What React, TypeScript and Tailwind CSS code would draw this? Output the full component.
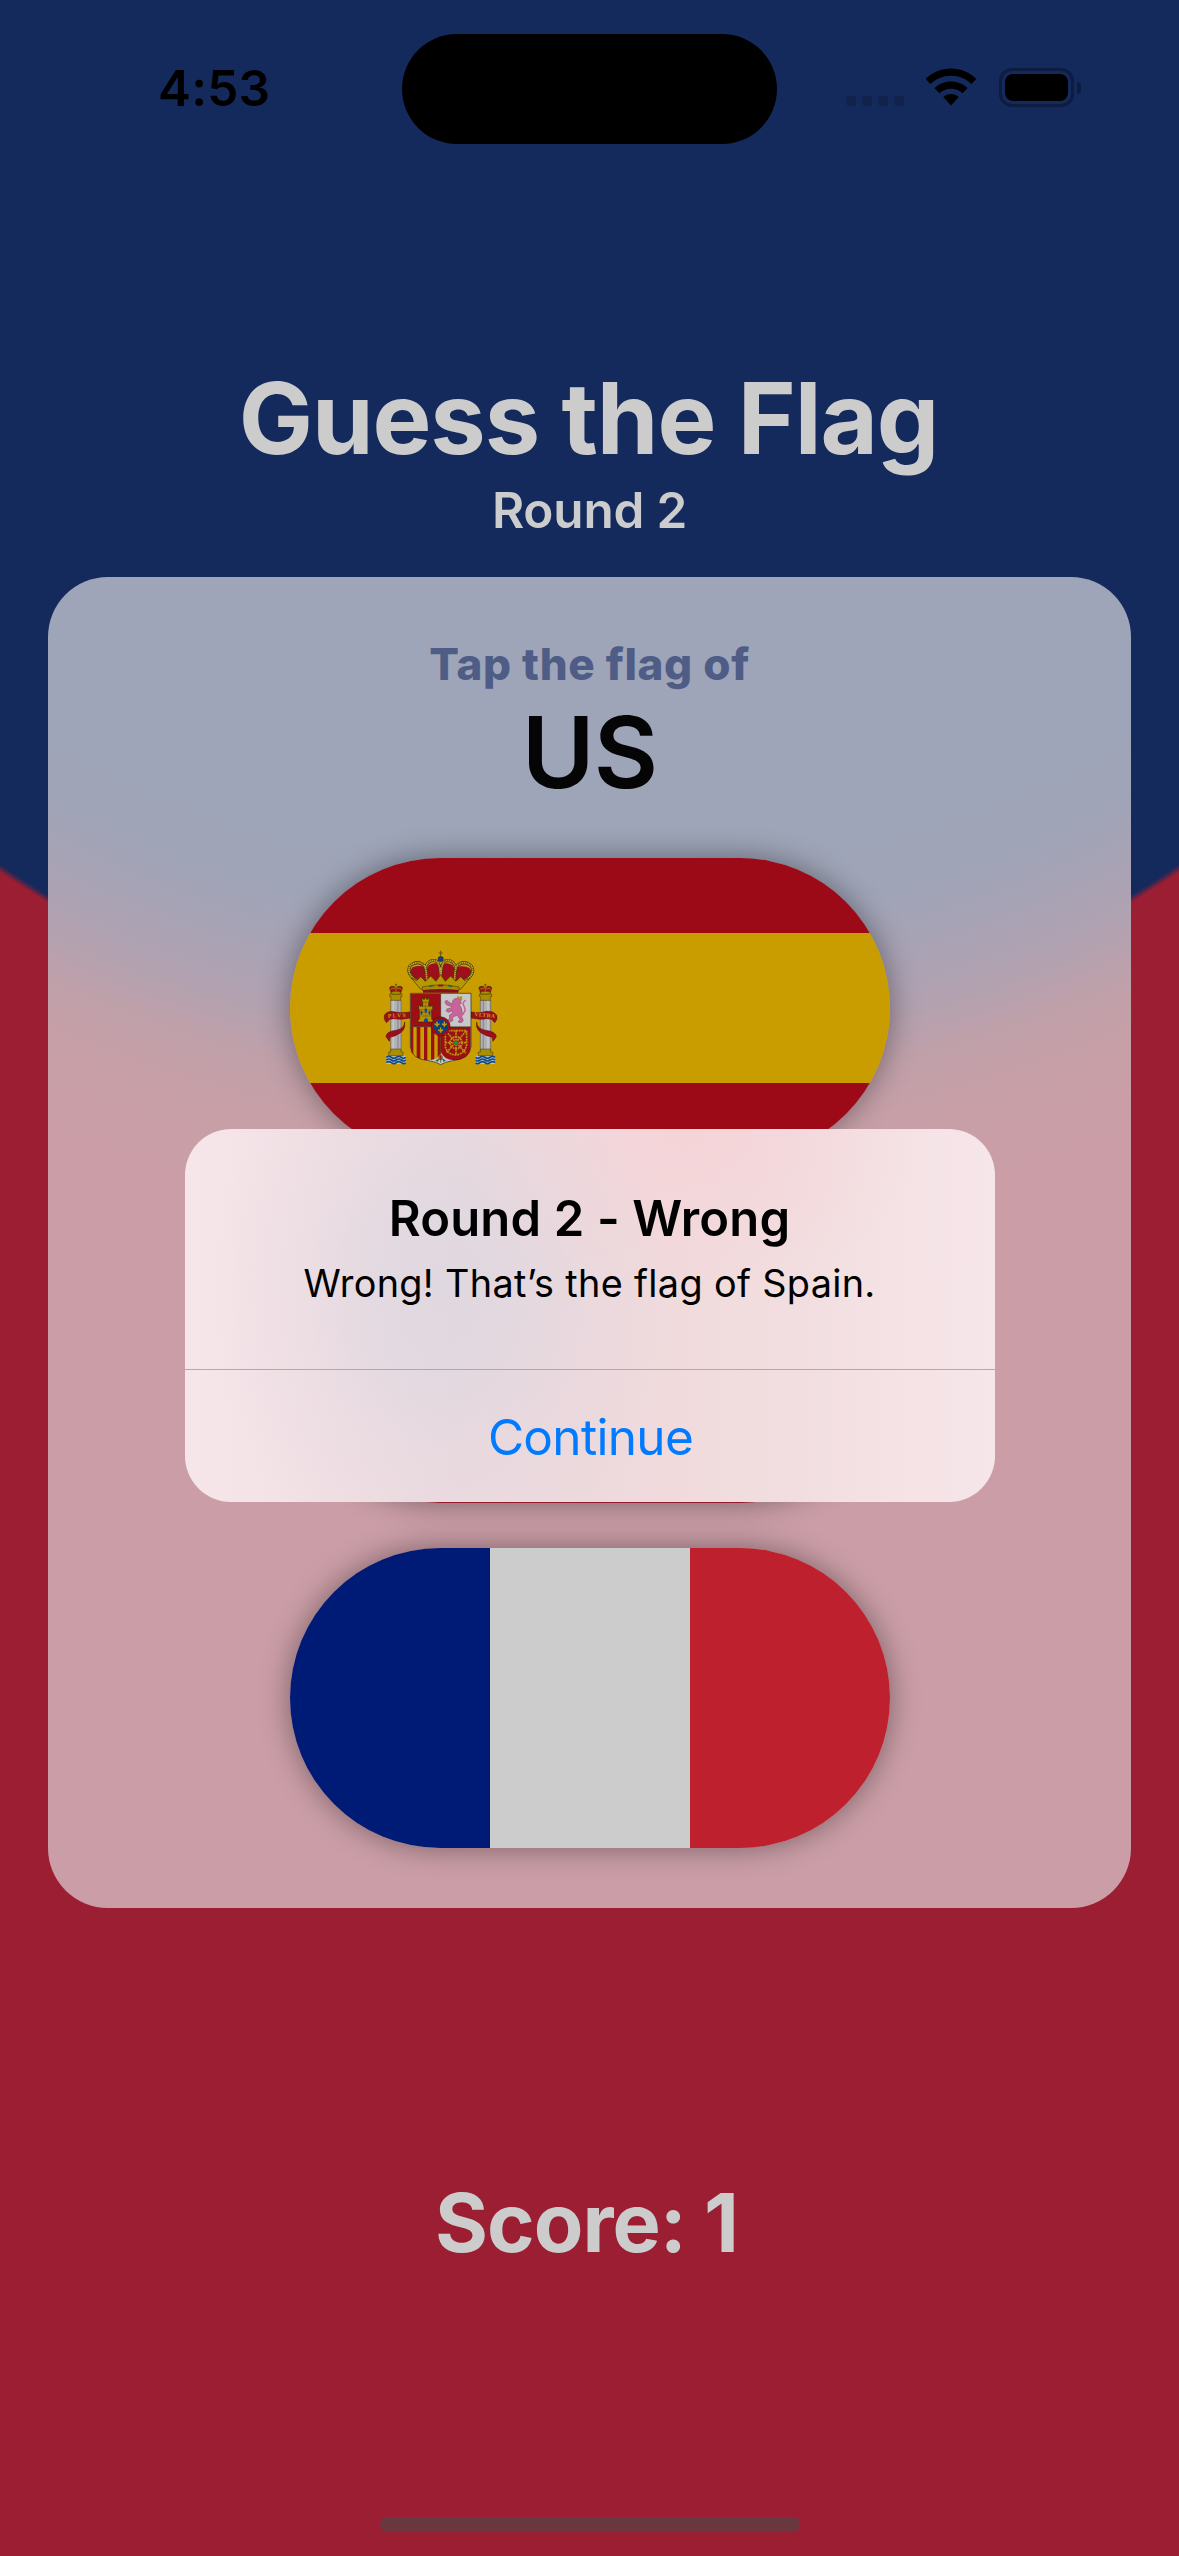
import type { ReactNode } from "react";

function WifiIcon() {
  return (
    <svg className="h-[38px] w-[52px]" viewBox="0 0 52 38" aria-hidden="true">
      <path d="M26 .6C35.800 .6 44.700 4.400 51.300 11L46.400 16C41.100 10.700 34 7.700 26 7.700S10.900 10.700 5.600 16L.700 11C7.300 4.400 16.200 .6 26 .6Z" />
      <path d="M26 13.500C32.500 13.500 38.300 16 42.600 20.100L37.500 25.200C34.500 22.400 30.500 20.700 26 20.700S17.500 22.400 14.500 25.200L9.400 20.100C13.700 16 19.500 13.500 26 13.500Z" />
      <path d="M26 26C29.100 26 31.700 27.100 33.700 29L26 37.400L18.300 29C20.300 27.100 22.900 26 26 26Z" />
    </svg>
  );
}

function Battery() {
  return (
    <div className="flex items-center gap-[3px]">
      <div className="h-[39px] w-[75px] rounded-[13px] border-[3px] border-[#0e1c3f] p-[3px]">
        <div className="h-full w-full rounded-[8px] bg-black" />
      </div>
      <div className="h-3 w-1 rounded-r-full bg-[#0e1c3f]" />
    </div>
  );
}

function StatusBar() {
  return (
    <header className="flex h-[177px] w-full items-start">
      <div className="w-[402px] pt-[58px] pl-[158px] text-[49.5px] leading-[60px] font-semibold tracking-[0.2px] text-black">
        4:53
      </div>
      <div className="mt-[33.5px] h-[110.5px] w-[375px] rounded-full bg-black" />
      <div className="mt-[68px] flex h-[39px] items-start pl-[69px]">
        <div className="mt-[28px] flex gap-[6px]">
          {[0, 1, 2, 3].map((i) => (
            <span key={i} className="h-[10px] w-[10px] rounded-[3.5px] bg-[#12234b]" />
          ))}
        </div>
        <div className="ml-[21px]">
          <WifiIcon />
        </div>
        <div className="ml-[22px]">
          <Battery />
        </div>
      </div>
    </header>
  );
}

function SmallCrown() {
  return (
    <g>
      <path d="M-17-10Q-23-20-13-22Q-5-24 0-18Q5-24 13-22Q23-20 17-10L14 0H-14Z" fill="#9c1018" stroke="#2e2400" strokeWidth="1.500" />
      <path d="M-16-12Q-12-21-6-14L0-22L6-14Q12-21 16-12M0-22V0" fill="none" stroke="#a08a10" strokeWidth="2.500" />
      <path d="M-14-5Q0-9 14-5V1H-14Z" fill="#a98f00" stroke="#3d3000" strokeWidth="1.200" />
      <path d="M0-30V-22M-3-27H3" stroke="#4b3d00" strokeWidth="2" />
    </g>
  );
}

function Pillar() {
  return (
    <g>
      <path d="M77 377H135V402H77Z" fill="#b9c0c6" />
      <path d="M77 382q7-6 15 0t15 0t15 0t13 0M77 390q7-6 15 0t15 0t15 0t13 0M77 398q7-6 15 0t15 0t15 0t13 0" fill="none" stroke="#0b4a86" strokeWidth="5" />
      <path d="M90 210H121V362H90Z" fill="#b1b1b5" stroke="#4c4c50" strokeWidth="1.500" />
      <path d="M98 211V361" stroke="#c6c6c8" strokeWidth="5" />
      <path d="M112 211V361" stroke="#8d8d93" strokeWidth="4" />
      <path d="M87 192H124V200H120V211H91V200H87Z" fill="#a98f00" stroke="#463800" strokeWidth="1.500" />
      <path d="M90 357H121V366H127V377H84V366H90Z" fill="#a98f00" stroke="#463800" strokeWidth="1.500" />
      <g transform="translate(106 191)">
        <SmallCrown />
      </g>
    </g>
  );
}

function Chains() {
  return (
    <g fill="none" stroke="#b9930a" strokeWidth="5" strokeDasharray="6 2">
      <path d="M254 302H318V342Q316 366 292 374Q262 378 254 350Z" />
      <path d="M286 302V376M254 338H318M256 304L316 370M316 304L257 368" />
      <circle cx="286" cy="338" r="18" />
    </g>
  );
}

function Castle() {
  return (
    <g>
      <path
        d="M172 276V268H176V239H174V225H178V229H181V225H184V229H186V216H184V204H188V208H192V203H198V208H202V204H206V216H204V229H206V225H209V229H212V225H216V239H213V268H217V276Z"
        fill="#b49300"
        stroke="#302500"
        strokeWidth="1.800"
      />
      <path d="M174 239H216M184 216H206M176 258H213M178 247H212M186 229H204M195 216V262" stroke="#594700" strokeWidth="1.300" />
      <path d="M190 276V270Q196 258 202 270V276ZM180 242H185V254H180ZM204 242H209V254H204ZM192 236H199V247H192Z" fill="#0c45b4" />
    </g>
  );
}

function CoatOfArms() {
  const arches =
    "M168 152Q136 132 148 108Q170 88 192 108Q198 122 198 150M194 112Q204 88 224 92Q240 98 240 150M286 112Q276 88 256 92Q240 98 240 150M312 152Q346 132 332 108Q310 88 288 108Q282 122 282 150";
  const shield = "M149 190H331V350Q328 388 276 392Q252 396 240 404Q228 396 204 392Q152 388 149 350Z";
  return (
    <svg className="h-[120px] w-[118px]" viewBox="64 54 354 360" aria-hidden="true">
      <Pillar />
      <g transform="translate(480 0) scale(-1 1)">
        <Pillar />
      </g>

      {/* ribbons around the two pillars */}
      <g fill="#9d0f1c" stroke="#4a0508" strokeWidth="1.500">
        <path d="M149 246Q120 250 104 246Q84 240 72 254Q68 270 78 278L87 268Q98 264 120 268L149 264Z" />
        <path d="M132 276Q132 294 110 300Q76 304 76 320L86 334L88 322Q128 312 132 290Z" />
        <path d="M331 246Q360 250 376 244Q398 242 408 256Q412 270 402 278L393 268Q382 264 360 268L331 264Z" />
        <path d="M348 276Q348 294 370 300Q406 304 407 320L397 334L395 322Q352 312 348 290Z" />
      </g>
      <g fontFamily="Liberation Serif, serif" fontSize="17" fontWeight="700" fill="#c9a000">
        <text x="82" y="262" textLength="53" transform="rotate(-3 108 260)">PLVS</text>
        <text x="341" y="261" textLength="62" transform="rotate(5 372 260)">VLTRA</text>
      </g>

      {/* royal crown */}
      <path d="M158 150Q140 128 156 112Q176 104 196 112Q220 92 240 104Q260 92 284 112Q308 104 326 114Q340 130 322 150L298 176H184Z" fill="#9d0f1c" />
      <path d="M176 97Q196 96 204 108L194 118L188 106ZM304 97Q284 96 276 108L286 118L292 106Z" fill="#c99c00" />
      <path d={arches} fill="none" stroke="#443600" strokeWidth="9" />
      <path d={arches} fill="none" stroke="#b9a53c" strokeWidth="5.500" strokeDasharray="4.500 1.300" />
      <path d="M152 144L168 152L180 140L194 154L210 138L226 154L240 134L254 154L270 138L286 154L300 140L312 152L328 144L300 178Q240 168 180 178Z" fill="#b89800" stroke="#3a2d00" strokeWidth="1.800" />
      <path d="M184 171Q240 158 296 171L293 184Q240 176 187 184Z" fill="#a98c00" stroke="#3a2d00" strokeWidth="1.500" />
      <path d="M187 180Q240 174 293 180V188H187Z" fill="#86101a" />
      <path d="M205 169L218 167M262 167L275 169" stroke="#18733c" strokeWidth="5" />
      <path d="M232 167H248" stroke="#a10f1c" strokeWidth="5" />
      <circle cx="240" cy="87" r="8" fill="#0b3f8f" stroke="#302800" strokeWidth="1.500" />
      <path d="M240 62V80M234 69H246" stroke="#6a5600" strokeWidth="3" />

      {/* shield */}
      <path d={shield} fill="#c4c4c4" />
      <path d="M150 191H240V290H150Z" fill="#9d0f14" />
      <path d="M241 191H330V290H241Z" fill="#c8c8c8" />
      <path d="M150 291H240V372Q232 390 204 391Q153 388 150 350Z" fill="#c6a000" />
      <path d="M150 291H158V374Q150 364 150 350ZM168 291H179V387L168 382ZM190 291H200V391L190 390ZM211 291H221V387L211 390ZM231 291H240V372L231 382Z" fill="#9d0f14" />
      <path d="M241 291H330V350Q327 388 280 391Q248 388 241 366Z" fill="#9d0f14" />
      <path d={shield} fill="none" stroke="#2f2410" strokeWidth="2" />
      <path d="M240 190V376M149 290H331" stroke="#2f2410" strokeWidth="1.500" />
      <Chains />
      <circle cx="286" cy="338" r="6" fill="#159060" stroke="#2f2410" strokeWidth="1" />
      <Castle />

      {/* lion */}
      <path
        d="M276 212Q282 203 292 205L303 209L299 214L303 219L296 224Q306 236 304 247L309 253L302 258L308 271L303 278L292 276L298 269L290 256Q282 258 275 263L277 271L270 276L262 270L267 266L266 256L276 248L275 242L264 247L256 243L260 236L272 234L271 229L258 225L252 216L258 210L264 216L275 222Z"
        fill="#cb629a"
        stroke="#6b2f50"
        strokeWidth="1.200"
      />
      <path d="M303 252Q318 246 311 230Q302 220 315 210" fill="none" stroke="#cb629a" strokeWidth="4.500" />
      <path d="M289 205L290 197L297 201L303 197L305 207Z" fill="#b49300" />

      {/* central escutcheon */}
      <circle cx="240" cy="289" r="25" fill="#0a3f86" stroke="#9d0f14" strokeWidth="7" />
      <circle cx="240" cy="289" r="28.500" fill="none" stroke="#3b0d10" strokeWidth="1.200" />
      {["translate(229 282)", "translate(251 282)", "translate(240 300)"].map((t) => (
        <path key={t} transform={t} d="M0-9Q4-4 2 0Q7-5 8 0Q8 4 3 4L2 8H-2L-3 4Q-8 4-8 0Q-7-5-2 0Q-4-4 0-9Z" fill="#bb9c10" />
      ))}

      {/* pomegranate */}
      <path d="M224 392L236 384L232 395ZM256 392L244 384L248 395Z" fill="#1c6b3a" />
      <path d="M240 388V399" stroke="#1c6b3a" strokeWidth="2" />
      <ellipse cx="240" cy="383" rx="5.500" ry="7" fill="#a2701a" stroke="#3b2400" strokeWidth="1.200" />
      <path d="M240 377V389" stroke="#a10f1c" strokeWidth="3" />
    </svg>
  );
}

function FlagButton({ children }: { children?: ReactNode }) {
  return (
    <button className="h-[300px] w-[600px] rounded-full shadow-[0_0_30px_rgba(0,0,0,0.4)]">
      <span className="block h-full w-full overflow-hidden rounded-full">{children}</span>
    </button>
  );
}

function SpainFlag() {
  return (
    <span className="flex h-full flex-col">
      <span className="h-[75px] bg-[#9d0a17]" />
      <span className="flex h-[150px] items-center bg-[#c99c00] pl-[92px]">
        <CoatOfArms />
      </span>
      <span className="h-[75px] bg-[#9d0a17]" />
    </span>
  );
}

function FranceFlag() {
  return (
    <span className="flex h-full">
      <span className="flex-1 bg-[#001b76]" />
      <span className="flex-1 bg-[#cccccc]" />
      <span className="flex-1 bg-[#be212d]" />
    </span>
  );
}

function UsFlag() {
  return (
    <span className="relative flex h-full flex-col">
      {Array.from({ length: 13 }, (_, i) => (
        <span key={i} className={i % 2 ? "flex-1 bg-[#cccccc]" : "flex-1 bg-[#931b2d]"} />
      ))}
      <span className="absolute top-0 left-0 h-[162px] w-[240px] bg-[#2f2e58]" />
    </span>
  );
}

function AlertDialog() {
  return (
    <div
      role="alertdialog"
      className="absolute top-[1129px] left-[184.5px] flex h-[373px] w-[810px] flex-col overflow-hidden rounded-[46px] bg-[radial-gradient(ellipse_230px_300px_at_255px_160px,rgba(219,214,224,0.75)_0%,rgba(221,215,224,0.62)_30%,rgba(226,216,224,0.28)_65%,rgba(232,217,222,0)_100%),radial-gradient(ellipse_240px_170px_at_500px_0px,rgba(246,211,215,0.9)_0%,rgba(245,212,216,0.45)_50%,rgba(242,214,218,0)_100%),linear-gradient(90deg,#f6e5e9_0%,#f3e2e6_12%,#ecdade_34%,#edd9dc_48%,#f0dadc_60%,#f2dee0_76%,#f5e3e6_90%,#f6e5e9_100%)]"
    >
      <div className="h-[240px] pt-[60px] text-center text-black">
        <h2 className="text-[49px] leading-[60px] font-semibold tracking-[0.15px]">Round 2 - Wrong</h2>
        <p className="mt-[10px] text-[37.8px] leading-[48px] tracking-[0.34px]">Wrong! That’s the flag of Spain.</p>
      </div>
      <div className="h-px w-full bg-[#b8a4aa]" />
      <button className="flex-1 pt-px pl-[2px] text-center text-[49.5px] leading-[60px] tracking-[-0.68px] text-[#007aff]">
        Continue
      </button>
    </div>
  );
}

export default function App() {
  return (
    <div className="relative flex h-[2556px] w-[1179px] flex-col items-center overflow-hidden bg-[radial-gradient(circle_at_50%_0px,#14295c_1046px,#9b1e33_1053px)] font-['Inter',sans-serif]">
      <StatusBar />
      <h1 className="mt-[181px] mr-[2px] text-[99px] leading-[120px] font-bold tracking-[-1.08px] text-[#cccccc]">Guess the Flag</h1>
      <p className="mt-[2px] text-[49.5px] leading-[60px] font-semibold tracking-[-0.21px] text-[#cccccc]">Round 2</p>

      <main className="mt-[37px] flex h-[1331px] w-[1083px] flex-col items-center rounded-[60px] bg-[radial-gradient(circle_at_50%_-777px,#9ea5b8_1050px,#a0a4b7_1130px,#a6a3b5_1180px,#afa2b2_1230px,#b6a1ae_1262px,#c0a0a9_1300px,#c79fa7_1350px,#cb9ea7_1430px)] pt-[60px]">
        <p className="text-[44px] leading-[54px] font-extrabold tracking-[0.68px] text-[#4f5d86]">Tap the flag of</p>
        <p className="mt-px text-[99px] leading-[120px] font-semibold tracking-[-0.8px] text-[#050505]">US</p>
        <div className="mt-[46px] flex flex-col gap-[45px]">
          <FlagButton>
            <SpainFlag />
          </FlagButton>
          <FlagButton>
            <UsFlag />
          </FlagButton>
          <FlagButton>
            <FranceFlag />
          </FlagButton>
        </div>
      </main>

      <p className="mt-[267px] mr-[6px] text-[81px] leading-[96px] font-bold tracking-[-0.98px] text-[#cccccc]">Score: 1</p>
      <div className="mt-[246px] h-[15px] w-[420px] rounded-full bg-linear-to-b from-[#653a40] to-[#6e353e]" />

      <AlertDialog />
    </div>
  );
}
